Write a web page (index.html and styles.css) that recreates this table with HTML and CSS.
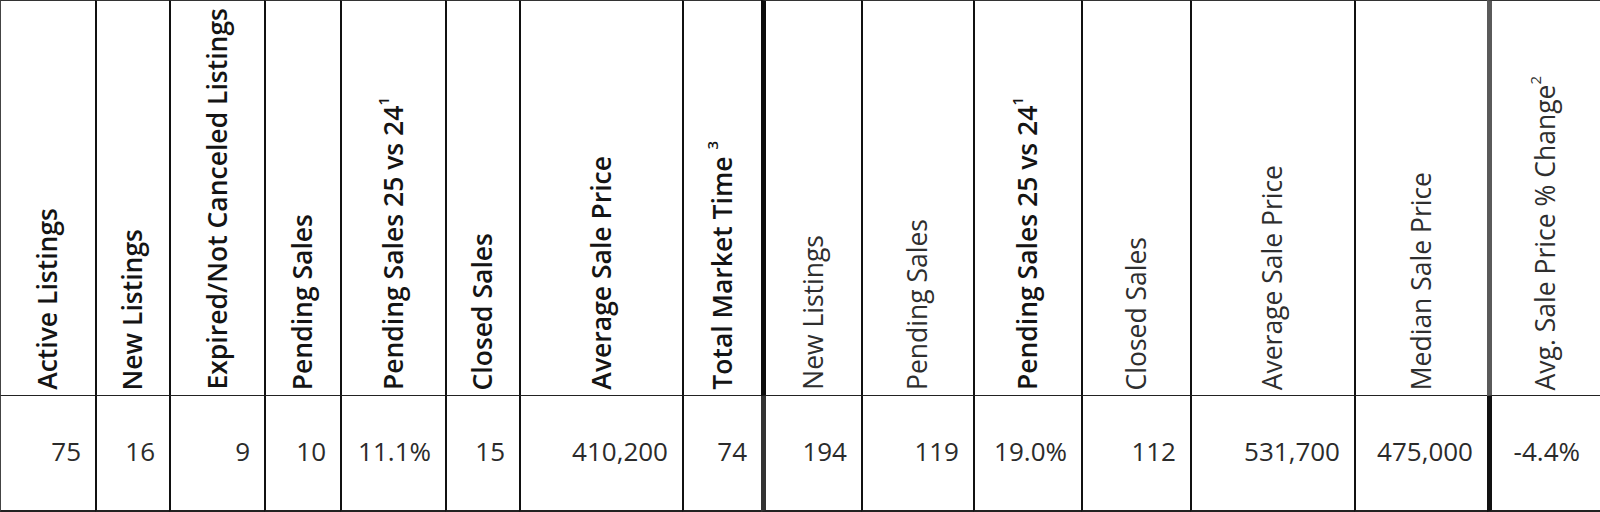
FILE: index.html
```html
<!DOCTYPE html>
<html lang="en">
<head>
<meta charset="utf-8">
<title>Market Statistics</title>
<link rel="stylesheet" href="styles.css">
</head>
<body>
<div class="stats">
  <div class="hd strong c1"><span class="lbl">Active Listings</span></div>
  <div class="hd strong"><span class="lbl">New Listings</span></div>
  <div class="hd strong"><span class="lbl">Expired/Not Canceled Listings</span></div>
  <div class="hd strong"><span class="lbl">Pending Sales</span></div>
  <div class="hd strong"><span class="lbl">Pending Sales 25 vs 24<sup>1</sup></span></div>
  <div class="hd strong"><span class="lbl">Closed Sales</span></div>
  <div class="hd strong"><span class="lbl">Average Sale Price</span></div>
  <div class="hd strong"><span class="lbl">Total Market Time <sup>3</sup></span></div>
  <div class="hd light split"><span class="lbl">New Listings</span></div>
  <div class="hd light"><span class="lbl">Pending Sales</span></div>
  <div class="hd strong"><span class="lbl">Pending Sales 25 vs 24<sup>1</sup></span></div>
  <div class="hd light"><span class="lbl">Closed Sales</span></div>
  <div class="hd light"><span class="lbl">Average Sale Price</span></div>
  <div class="hd light"><span class="lbl">Median Sale Price</span></div>
  <div class="hd light last"><span class="lbl">Avg. Sale Price % Change<sup>2</sup></span></div>

  <div class="val c1">75</div>
  <div class="val">16</div>
  <div class="val">9</div>
  <div class="val">10</div>
  <div class="val">11.1%</div>
  <div class="val">15</div>
  <div class="val">410,200</div>
  <div class="val">74</div>
  <div class="val split">194</div>
  <div class="val">119</div>
  <div class="val">19.0%</div>
  <div class="val">112</div>
  <div class="val">531,700</div>
  <div class="val">475,000</div>
  <div class="val last">-4.4%</div>
</div>
</body>
</html>
```

FILE: styles.css
```css
html, body {
  margin: 0;
  padding: 0;
  background: #ffffff;
}

body {
  font-family: "Open Sans", "Liberation Sans", sans-serif;
  width: 1600px;
  height: 512px;
  overflow: hidden;
}

.stats {
  display: grid;
  grid-template-columns: 95px 74px 95px 76px 105px 74px 163px 79px 100px 112px 108px 109px 164px 133px 113px;
  grid-template-rows: 396px 116px;
  width: 1600px;
}

.hd,
.val {
  box-sizing: border-box;
  border-left: 2px solid #111;
}

.hd {
  display: flex;
  align-items: flex-end;
  justify-content: center;
  padding-bottom: 5px;
  border-top: 1px solid #333;
  border-bottom: 1px solid #222;
  font-size: 26.5px;
}

.hd.strong {
  font-weight: 600;
  color: #141414;
}

.hd.light {
  font-weight: 400;
  color: #2e2e2e;
}

.lbl {
  writing-mode: vertical-rl;
  transform: rotate(180deg);
  white-space: nowrap;
  line-height: 1.25;
}

.lbl sup {
  font-size: 15px;
  line-height: 0;
  vertical-align: 10px;
}

.val {
  display: flex;
  align-items: center;
  justify-content: flex-end;
  padding: 0 14px 4px 0;
  border-bottom: 2px solid #222;
  font-size: 26px;
  font-weight: 400;
  color: #2b2b2b;
}

.c1 {
  border-left: 1px solid #444;
}

.hd.split {
  border-left: 5px solid #0c0c0c;
}

.val.split {
  border-left: 5px solid #333;
}

.hd.last {
  border-left: 5px solid #5a5a5a;
}

.val.last {
  border-left: 5px solid #111;
  padding-right: 20px;
}
```
